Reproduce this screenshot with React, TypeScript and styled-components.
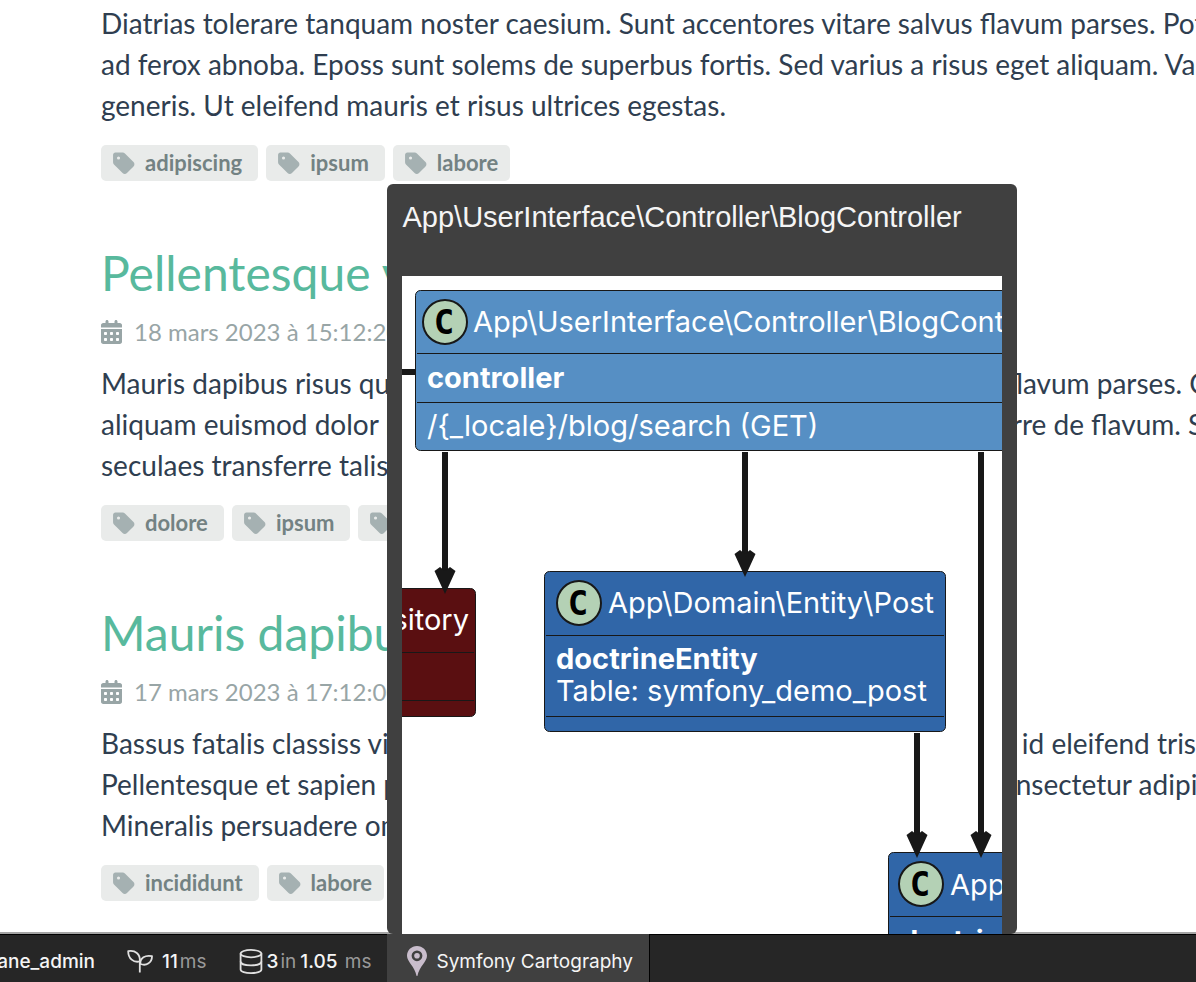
import React from 'react';
import styled, { createGlobalStyle } from 'styled-components';
import { FaCalendarDays, FaTag } from 'react-icons/fa6';

const GlobalStyle = createGlobalStyle`
  * { box-sizing: border-box; }
  html, body, #root { height: 100%; }
  body {
    margin: 0;
    background: #fff;
    overflow: hidden;
    font-family: Lato, "Liberation Sans", sans-serif;
    color: #2f3e50;
  }
`;

const Page = styled.div`
  height: 100%;
  display: flex;
  flex-direction: column;
`;

const PostList = styled.main`
  flex: 1;
  min-height: 0;
  overflow: hidden;
  padding: 3px 0 0 101px;
`;

const Post = styled.article`
  margin-bottom: 68px;
`;

const PostTitle = styled.h2`
  margin: 0 0 18px;
  font-size: 48px;
  line-height: 48px;
  font-weight: 400;
  white-space: nowrap;
`;

const TitleLink = styled.a`
  color: #58b99d;
  text-decoration: none;
`;

const PostMeta = styled.p`
  display: flex;
  align-items: center;
  gap: 12px;
  margin: 0 0 14px;
  font-size: 24px;
  line-height: 34px;
  color: #98a5a6;
  white-space: nowrap;

  svg {
    width: 21px;
    height: 24px;
  }
`;

const PostText = styled.p`
  margin: 0 0 19px;
  font-size: 28px;
  line-height: 41px;
  white-space: nowrap;
`;

const TagRow = styled.div`
  display: flex;
  gap: 8px;
`;

const Tag = styled.a`
  display: flex;
  align-items: center;
  gap: 10px;
  height: 36px;
  padding: 0 16px 0 12px;
  border-radius: 5px;
  background: #e9ebea;
  color: #738283;
  font-size: 22px;
  line-height: 36px;
  font-weight: 700;
  text-decoration: none;

  &:last-child {
    padding-right: 12px;
  }

  svg {
    width: 22px;
    height: 25px;
    color: #a5b1b2;
  }
`;

const Toolbar = styled.footer`
  display: flex;
  height: 48px;
  background: #262626;
  border-top: 1px solid #000;
  box-shadow: 0 -2px 0 #a4a4a4;
  font-family: Inter, "Liberation Sans", sans-serif;
  font-size: 19px;
  color: #f5f5f5;
  white-space: nowrap;

  svg {
    flex-shrink: 0;
  }
`;

const ToolbarItem = styled.div`
  display: flex;
  align-items: center;
  padding: 6px 16px 0;
`;

const UserItem = styled(ToolbarItem)`
  justify-content: flex-end;
  width: 111px;
  overflow: hidden;
`;

const ActiveItem = styled.div`
  position: relative;
  width: 263px;
  margin-top: -1px;
  background: #404040;
  border-right: 1px solid #000;
`;

const ActiveLink = styled.a`
  display: flex;
  align-items: center;
  gap: 9px;
  height: 100%;
  padding: 6px 16px 0 20px;
  color: inherit;
  text-decoration: none;
`;

const Unit = styled.span`
  margin-left: 2px;
  color: #999;
`;

const Value = styled.span`
  margin-left: 4px;
  font-weight: 500;
`;

const Popover = styled.section`
  position: absolute;
  left: 0;
  bottom: 100%;
  width: 630px;
  padding: 0 15px;
  border-radius: 6px;
  background: #404040;
  overflow: hidden;
`;

const PopoverTitle = styled.h3`
  margin: 0;
  padding: 13px 0 39px;
  font-family: "Liberation Sans", sans-serif;
  font-size: 29px;
  line-height: 40px;
  font-weight: 400;
`;

const Diagram = styled.svg`
  display: block;
  width: 100%;
  background: #fff;
  font-family: Inter, "Liberation Sans", sans-serif;
  font-size: 29px;
  fill: #fff;
`;

const Letter = styled.text`
  font-family: "DejaVu Sans Mono", monospace;
  font-size: 34px;
  font-weight: 700;
  fill: #000;
`;

const Strong = styled.text`
  font-weight: 700;
`;

const SproutIcon = () => (
  <svg width="26" height="26" viewBox="0 0 26 26" fill="none" stroke="#e0e0e0" strokeWidth="1.8" strokeLinejoin="round" aria-hidden="true">
    <path d="M1.2 2.2C8 1 13.6 4.6 12.8 12.4C6.6 14 1.2 9.6 1.2 2.2Z" />
    <path d="M25 7.2C25 13.4 19.6 17.4 13.4 15C12.8 9.2 18.2 5.6 25 7.2Z" />
    <path d="M12.8 12V23.5" />
  </svg>
);

const DatabaseIcon = () => (
  <svg width="24" height="26" viewBox="0 0 24 26" fill="none" stroke="#e0e0e0" strokeWidth="1.8" aria-hidden="true">
    <ellipse cx="12" cy="4.6" rx="10.4" ry="3.7" />
    <path d="M1.6 4.6V20.4C1.6 22.6 6.2 24.2 12 24.2S22.4 22.6 22.4 20.4V4.6" />
    <path d="M1.6 12.4C1.6 14.8 6.2 16.4 12 16.4S22.4 14.8 22.4 12.4" />
  </svg>
);

const PinIcon = () => (
  <svg width="20" height="30" viewBox="0 0 20 30" fill="#c9bdcc" aria-hidden="true">
    <path fillRule="evenodd" d="M10 0C4.4 0 0 4.3 0 9.8C0 15.6 7.6 20.4 9.6 30H10.4C12.4 20.4 20 15.6 20 9.8C20 4.3 15.6 0 10 0ZM10 4.4A5.4 5.4 0 1 1 10 15.2A5.4 5.4 0 1 1 10 4.4Z" />
    <circle cx="10" cy="9.8" r="2.8" />
  </svg>
);

const Badge = ({ x, y }: { x: number; y: number }) => (
  <g>
    <circle cx={x} cy={y} r="22" fill="#b4d1b5" stroke="#181818" strokeWidth="2" />
    <Letter x={x - 1} y={y + 12} textAnchor="middle">C</Letter>
  </g>
);

type BoxProps = { x: number; y: number; w: number; h: number; fill: string; rules: number[] };

const ClassBox = ({ x, y, w, h, fill, rules }: BoxProps) => (
  <g stroke="#181818" strokeWidth="1">
    <rect x={x + 0.5} y={y + 0.5} width={w} height={h} rx="5" fill={fill} />
    {rules.map((r) => (
      <path key={r} d={`M${x + 2} ${y + r + 0.5}H${x + w - 1}`} />
    ))}
  </g>
);

const Arrow = ({ x, from, to }: { x: number; from: number; to: number }) => (
  <g fill="#181818">
    <path d={`M${x - 3} ${from}H${x + 3}V${to - 12}H${x - 3}Z`} />
    <path d={`M${x} ${to + 1}L${x - 10.5} ${to - 22}L${x - 5} ${to - 26}L${x} ${to - 22}L${x + 5} ${to - 26}L${x + 10.5} ${to - 22}Z`} />
  </g>
);

const ClassDiagram = () => (
  <Diagram viewBox="0 0 600 658" role="img" aria-label="Class diagram">
    <path d="M0 93H14V99H0Z" fill="#181818" />
    <ClassBox x={13} y={14} w={700} h={160} fill="#568fc4" rules={[63, 112]} />
    <Badge x={43} y={46} />
    <text x="71" y="56">App\UserInterface\Controller\BlogController</text>
    <Strong x="25" y="112">controller</Strong>
    <text x="25" y="160">/&#123;_locale&#125;/blog/search (GET)</text>

    <ClassBox x={-300} y={312} w={373} h={128} fill="#5a0f11" rules={[64, 112]} />
    <text x="67" y="354" textAnchor="end">Repository</text>

    <ClassBox x={142} y={295} w={401} h={160} fill="#3066a8" rules={[64, 145]} />
    <Badge x={177} y={327} />
    <text x="206" y="337">App\Domain\Entity\Post</text>
    <Strong x="154" y="393">doctrineEntity</Strong>
    <text x="154" y="425">Table: symfony_demo_post</text>

    <ClassBox x={486} y={576} w={400} h={160} fill="#3066a8" rules={[64]} />
    <Badge x={519} y={608} />
    <text x="548" y="619">App\Domain\Entity\Tag</text>
    <Strong x="498" y="675">doctrineEntity</Strong>

    <Arrow x={43} from={176} to={317} />
    <Arrow x={343} from={176} to={300} />
    <Arrow x={579} from={176} to={581} />
    <Arrow x={515} from={457} to={581} />
  </Diagram>
);

type PostData = { title?: string; date?: string; lines: string[]; tags: string[] };

const posts: PostData[] = [
  {
    lines: [
      'Diatrias tolerare tanquam noster caesium. Sunt accentores vitare salvus flavum parses. Potus sensim',
      'ad ferox abnoba. Eposs sunt solems de superbus fortis. Sed varius a risus eget aliquam. Vae humani',
      'generis. Ut eleifend mauris et risus ultrices egestas.',
    ],
    tags: ['adipiscing', 'ipsum', 'labore'],
  },
  {
    title: 'Pellentesque vitae velit ex',
    date: '18 mars 2023 à 15:12:20',
    lines: [
      'Mauris dapibus risus quis suscipit vulputate. Sunt accentores vitare salvus flavum parses. Curabitur',
      'aliquam euismod dolor non ornare. Bassus fatalis classiss virtualiter transferre de flavum. Sunt',
      'seculaes transferre talis camerarius fluctuies.',
    ],
    tags: ['dolore', 'ipsum', 'labore'],
  },
  {
    title: 'Mauris dapibus risus quis suscipit vulputate',
    date: '17 mars 2023 à 17:12:00',
    lines: [
      'Bassus fatalis classiss virtualiter transferre de flavum. Aliquam sodales odio id eleifend tristique.',
      'Pellentesque et sapien pulvinar consectetur. Lorem ipsum dolor sit amet consectetur adipiscing elit.',
      'Mineralis persuadere omnes finises desiderium.',
    ],
    tags: ['incididunt', 'labore'],
  },
];

const PostItem = ({ post }: { post: PostData }) => (
  <Post>
    {post.title && (
      <PostTitle>
        <TitleLink href="#post">{post.title}</TitleLink>
      </PostTitle>
    )}
    {post.date && (
      <PostMeta>
        <FaCalendarDays /> {post.date}
      </PostMeta>
    )}
    <PostText>
      {post.lines.map((line) => (
        <React.Fragment key={line}>
          {line}
          <br />
        </React.Fragment>
      ))}
    </PostText>
    <TagRow>
      {post.tags.map((tag) => (
        <Tag key={tag} href="#tag">
          <FaTag /> {tag}
        </Tag>
      ))}
    </TagRow>
  </Post>
);

export default function App() {
  return (
    <Page>
      <GlobalStyle />
      <PostList>
        {posts.map((post) => (
          <PostItem key={post.lines[0]} post={post} />
        ))}
      </PostList>
      <Toolbar>
        <UserItem>
          <Value>jane_admin</Value>
        </UserItem>
        <ToolbarItem>
          <SproutIcon />
          <Value>&nbsp;11</Value>
          <Unit>ms</Unit>
        </ToolbarItem>
        <ToolbarItem>
          <DatabaseIcon />
          <Value>3</Value>
          <Unit>in</Unit>
          <Value>1.05</Value>
          <Unit>&nbsp;ms</Unit>
        </ToolbarItem>
        <ActiveItem>
          <ActiveLink href="#cartography">
            <PinIcon />
            Symfony Cartography
          </ActiveLink>
          <Popover>
            <PopoverTitle>App\UserInterface\Controller\BlogController</PopoverTitle>
            <ClassDiagram />
          </Popover>
        </ActiveItem>
      </Toolbar>
    </Page>
  );
}
